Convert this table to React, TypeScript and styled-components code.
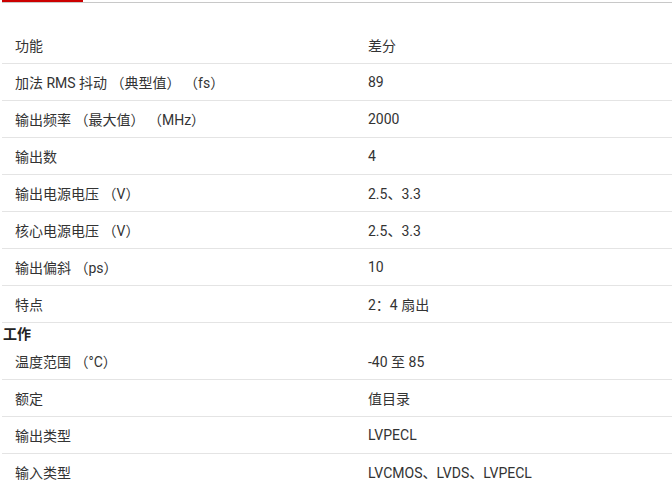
import React from "react";
import styled, { createGlobalStyle } from "styled-components";

const Global = createGlobalStyle`
  html, body { margin: 0; padding: 0; background: #fff; }
  body { font-family: Roboto, "Noto Sans CJK SC", sans-serif; color: #333; overflow: hidden; }
`;

const Page = styled.div`
  width: 672px;
  height: 490px;
  overflow: hidden;
  padding-left: 2px;
  box-sizing: border-box;
`;

const TabBar = styled.div`
  display: flex;
  height: 2px;
  border-bottom: 1px solid #c8c8c8;
`;

const ActiveTab = styled.div`
  width: 81px;
  height: 2px;
  background: #cc0000;
`;

const Table = styled.div`
  margin-top: 24px;
  width: 706px;
  display: flex;
  flex-direction: column;
`;

const Row = styled.div`
  display: grid;
  grid-template-columns: 353px 1fr;
  height: 36px;
  align-items: center;
  border-bottom: 1px solid #e4e4e4;
  font-size: 14px;
`;

const Cell = styled.div`
  padding-left: 13px;
  white-space: nowrap;
`;

const Section = styled.div`
  height: 20px;
  display: flex;
  align-items: center;
  padding-left: 1px;
  font-size: 14px;
  font-weight: 700;
  color: #222;
`;

type Item = { k: string; v: string } | { section: string };

const items: Item[] = [
  { k: "功能", v: "差分" },
  { k: "加法 RMS 抖动 （典型值） （fs）", v: "89" },
  { k: "输出频率 （最大值） （MHz）", v: "2000" },
  { k: "输出数", v: "4" },
  { k: "输出电源电压 （V）", v: "2.5、3.3" },
  { k: "核心电源电压 （V）", v: "2.5、3.3" },
  { k: "输出偏斜 （ps）", v: "10" },
  { k: "特点", v: "2：4 扇出" },
  { section: "工作" },
  { k: "温度范围 （°C）", v: "-40 至 85" },
  { k: "额定", v: "值目录" },
  { k: "输出类型", v: "LVPECL" },
  { k: "输入类型", v: "LVCMOS、LVDS、LVPECL" },
];

export default function App() {
  return (
    <Page>
      <Global />
      <TabBar>
        <ActiveTab />
      </TabBar>
      <Table>
        {items.map((it, i) =>
          "section" in it ? (
            <Section key={i}>{it.section}</Section>
          ) : (
            <Row key={i}>
              <Cell>{it.k}</Cell>
              <Cell>{it.v}</Cell>
            </Row>
          )
        )}
      </Table>
    </Page>
  );
}
